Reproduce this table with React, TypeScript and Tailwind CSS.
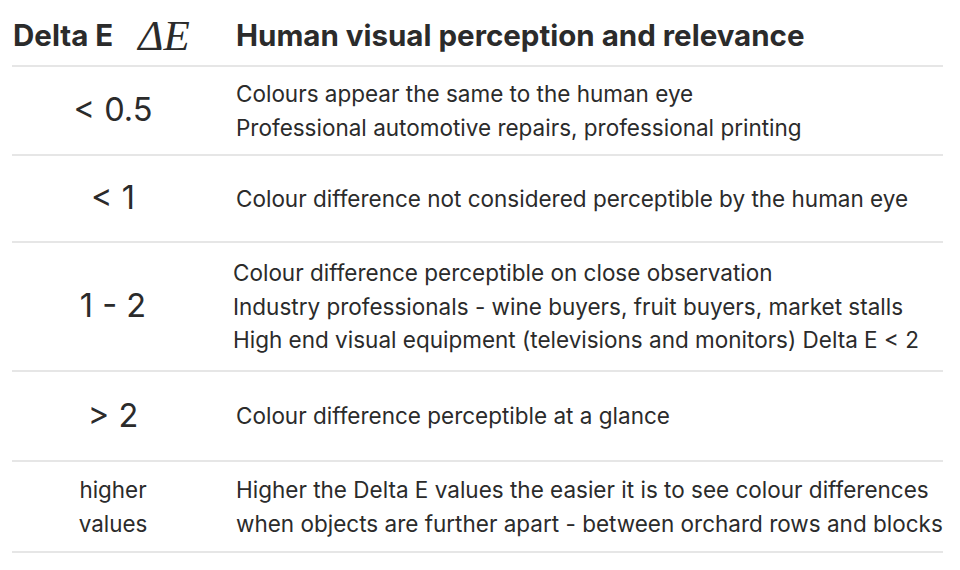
export default function App() {
  const rows: { left: React.ReactNode; leftCls: string; right: string[]; h: string; rpad: string }[] = [
    { left: "< 0.5", leftCls: "text-[32.5px]", right: ["Colours appear the same to the human eye", "Professional automotive repairs, professional printing"], h: "h-[89px]", rpad: "pl-[22px]" },
    { left: "< 1", leftCls: "text-[32.5px]", right: ["Colour difference not considered perceptible by the human eye"], h: "h-[87px]", rpad: "pl-[22px]" },
    { left: "1 - 2", leftCls: "text-[32.5px]", right: ["Colour difference perceptible on close observation", "Industry professionals - wine buyers, fruit buyers, market stalls", "High end visual equipment (televisions and monitors) Delta E < 2"], h: "h-[129px]", rpad: "pl-[19px]" },
    { left: "> 2", leftCls: "text-[32.5px]", right: ["Colour difference perceptible at a glance"], h: "h-[90px]", rpad: "pl-[22px]" },
    { left: <>higher<br />values</>, leftCls: "text-[22.4px] leading-[33.5px]", right: ["Higher the Delta E values the easier it is to see colour differences", "when objects are further apart - between orchard rows and blocks"], h: "h-[91px]", rpad: "pl-[22px]" },
  ];
  return (
    <div className="w-[960px] h-[570px] bg-white text-[#2b2b2b]" style={{ fontFamily: "Inter, 'Noto Sans', sans-serif" }}>
      <div className="ml-[12px] w-[931px]">
        <div className="flex items-center h-[67px] border-b-2 border-[#e6e6e6]">
          <div className="w-[202px] flex items-center pl-[1px] pt-[6px]">
            <span className="text-[29.5px] font-bold">Delta E</span>
            <span className="ml-[25px] text-[43px] italic leading-none" style={{ fontFamily: "'Liberation Serif', 'DejaVu Serif', serif" }}>ΔE</span>
          </div>
          <div className="pl-[22px] text-[29.5px] font-bold pt-[6px]">Human visual perception and relevance</div>
        </div>
        {rows.map((r, i) => (
          <div key={i} className={`flex items-center border-b-2 border-[#e6e6e6] ${r.h}`}>
            <div className={`w-[202px] text-center ${r.leftCls}`}>{r.left}</div>
            <div className={`${r.rpad} text-[22.5px] leading-[33.5px]`}>
              {r.right.map((t, j) => (
                <div key={j}>{t}</div>
              ))}
            </div>
          </div>
        ))}
      </div>
    </div>
  );
}
